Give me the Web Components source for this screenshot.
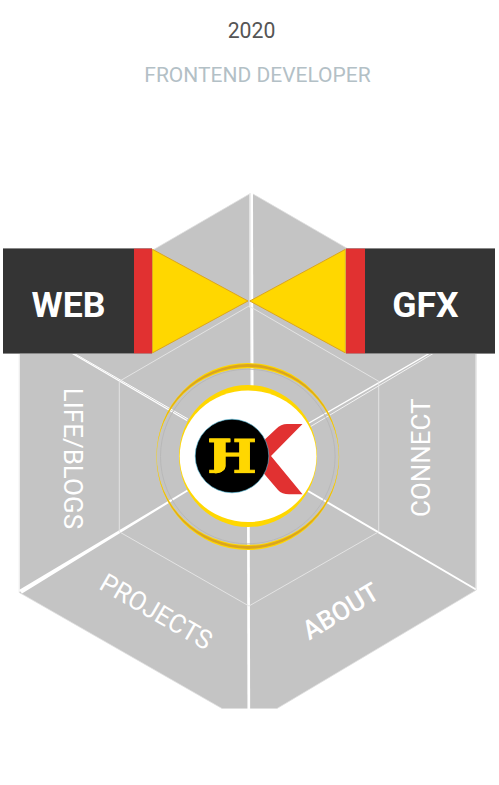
<!DOCTYPE html>
<html lang="en"><head><meta charset="utf-8"><title>Portfolio</title>
<style>html,body{margin:0;background:#fff;overflow:hidden;height:785px}</style></head>
<body>
<portfolio-page></portfolio-page>
<script>
class PageHeading extends HTMLElement{
  constructor(){super();this.attachShadow({mode:'open'}).innerHTML=`
<style>:host{display:flex;flex-direction:column;align-items:center;gap:20px;padding:18px 0 0 4px;font:21.2px/25px Roboto,sans-serif}
.year{color:#555}.role{color:#b3c0c6;font-size:21px;padding-left:12px}</style>
<div class="year"><slot name="year"></slot></div><div class="role"><slot name="role"></slot></div>`}
}
customElements.define('page-heading',PageHeading);

class NavWheel extends HTMLElement{
  constructor(){super();this.attachShadow({mode:'open'}).innerHTML=`
<style>:host{display:block}svg{display:block}text{font-family:Roboto,sans-serif;font-size:26.2px;fill:#fff}
.mono{font:700 46px 'DejaVu Serif',serif;fill:#ffd700;stroke:#ffd700;stroke-width:.8}</style>
<svg width="499" height="620" viewBox="0 165 499 620">
<path d="M249.5 194L251 193.5L253 194L476.3 323V590L277 708.5H222L19.3 592.5V327.5Z" fill="#c4c4c4" stroke="#dedede" stroke-width=".8"/>
<g fill="none" stroke="#fff">
<path d="M250.8 193V306L251.5 306L252 400" stroke="#eee" stroke-width="3"/>
<path d="M252 193L252.4 400" stroke-width="2"/>
<path d="M248.4 520L248.8 709" stroke-width="2.7"/>
<path d="M71.5 353L187 420.5" stroke-width="1.4"/>
<path d="M73.5 353L188 419" stroke-width="1"/>
<path d="M430 353L379 382.7L309 423" stroke-width="1.4"/>
<path d="M434 353L379 385.7L309 427.5" stroke-width="1" stroke="#f2f2f2"/>
<path d="M308 491L476 589.5" stroke-width="2"/>
<path d="M476 323V590M19.5 328V592" stroke="#eee" stroke-width="1"/>
</g>
<path d="M19 590L187 489.8L188 491.2L22 593.6Z" fill="#fff"/>
<path d="M249 306L119.3 381.3V531.8L249 606L378.7 531.8V381.3Z" fill="none" stroke="#e6e6e6" stroke-width=".9"/>
<path fill="#ffd700" fill-rule="evenodd" d="M156.4 456.5a91.4 93.5 0 1 1 182.8 0a91.4 93.5 0 1 1-182.8 0ZM156.8 456.5a91 88.3 0 1 0 182 0a91 88.3 0 1 0-182 0Z"/>
<path fill="#daa520" fill-rule="evenodd" d="M156.6 456.5a91.2 92.4 0 1 1 182.4 0a91.2 92.4 0 1 1-182.4 0ZM156.6 456.5a91.2 89.4 0 1 0 182.4 0a91.2 89.4 0 1 0-182.4 0Z"/>
<circle cx="247.8" cy="456.5" r="87.3" fill="none" stroke="#b5b5b5" stroke-width=".8"/>
<ellipse cx="248" cy="456" rx="69" ry="71" fill="#ffd700"/>
<ellipse cx="248.1" cy="456.3" rx="68.4" ry="65.8" fill="#fff"/>
<path d="M260 444L276 429Q281 424 287 424H302.5L271 456L302.5 494.3H289Q282 494.3 278 490L260 469Z" fill="#e13131"/>
<circle cx="232" cy="456" r="36.8" fill="#000" stroke="#51b8d8" stroke-width=".6"/>
<clipPath id="mono-cut"><path d="M205 435H260V473.3H232.8V460H226.5V463Q226 472 217 473.3H205Z"/></clipPath>
<g clip-path="url(#mono-cut)"><text class="mono" transform="translate(207.3 472.8) scale(1.14 1)" x="0 0">JH</text></g>
<text transform="translate(64.4 387.7) rotate(90)" textLength="141.4" lengthAdjust="spacingAndGlyphs">LIFE/BLOGS</text>
<text transform="translate(430 517) rotate(-90)" textLength="118.5" lengthAdjust="spacingAndGlyphs">CONNECT</text>
<text transform="translate(97.8 588.3) rotate(30)" textLength="124.5" lengthAdjust="spacingAndGlyphs">PROJECTS</text>
<text transform="translate(309.2 640.4) rotate(-31)" textLength="84" lengthAdjust="spacingAndGlyphs" style="font-weight:500">ABOUT</text>
</svg>`}
}
customElements.define('nav-wheel',NavWheel);

class PencilBanner extends HTMLElement{
  constructor(){super();this.attachShadow({mode:'open'}).innerHTML=`
<style>:host{display:flex;height:106px;width:246px;font:700 35.6px/42px Roboto,sans-serif;color:#fff}
:host([flip]){flex-direction:row-reverse}
.label{box-sizing:border-box;width:130.5px;background:#343434;border:1px solid #888;border-width:1px 0;display:flex;align-items:center;justify-content:center;padding-top:7px}
:host([flip]) .label{padding-right:9px}
.band{width:18.7px;background:#e13131;box-sizing:border-box;border:solid #b77;border-width:1px 0}
svg{display:block;width:96.8px;height:106px}:host([flip]) svg{transform:scaleX(-1)}</style>
<div class="label"><slot></slot></div><div class="band"></div>
<svg viewBox="0 0 97 106"><path d="M.4 1.2L96.2 53L.4 105Z" fill="#ffd700" stroke="#daa520"/></svg>`}
}
customElements.define('pencil-banner',PencilBanner);

class PortfolioPage extends HTMLElement{
  constructor(){super();this.attachShadow({mode:'open'}).innerHTML=`
<style>:host{display:grid;width:499px;height:785px;grid-template-rows:165px 620px}
main{position:relative}.banners{position:absolute;left:3.2px;right:4px;top:83px;display:flex;justify-content:space-between}</style>
<page-heading><span slot="year">2020</span><span slot="role">FRONTEND DEVELOPER</span></page-heading>
<main><nav-wheel></nav-wheel><div class="banners"><pencil-banner>WEB</pencil-banner><pencil-banner flip>GFX</pencil-banner></div></main>`}
}
customElements.define('portfolio-page',PortfolioPage);
</script>
</body></html>
